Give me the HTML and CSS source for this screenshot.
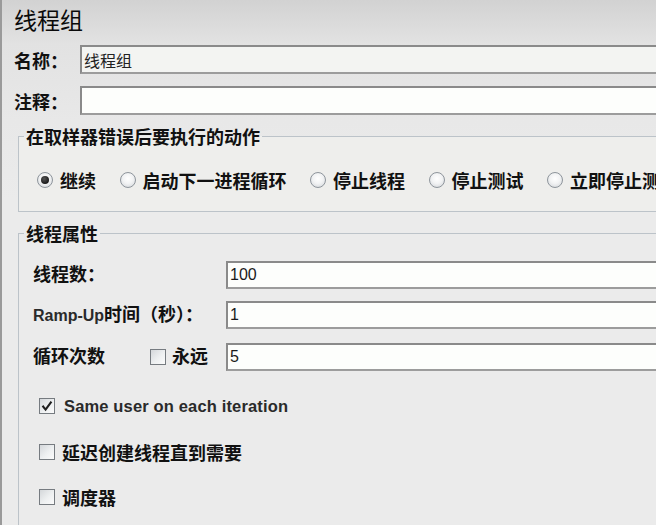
FILE: index.html
```html
<!DOCTYPE html>
<html lang="zh-CN">
<head>
<meta charset="utf-8">
<title>线程组</title>
<link rel="stylesheet" href="styles.css">
</head>
<body>
<div class="panel">
  <div class="title">线程组</div>
  <div class="row r-name">
    <span class="lbl">名称：</span>
    <div class="field field-grey"><span class="val-cjk">线程组</span></div>
  </div>
  <div class="row r-comment">
    <span class="lbl">注释：</span>
    <div class="field"></div>
  </div>
  <fieldset class="group g1">
    <legend>在取样器错误后要执行的动作</legend>
    <div class="radios">
      <span class="opt"><span class="radio on"></span>继续</span>
      <span class="opt"><span class="radio"></span>启动下一进程循环</span>
      <span class="opt"><span class="radio"></span>停止线程</span>
      <span class="opt"><span class="radio"></span>停止测试</span>
      <span class="opt"><span class="radio"></span>立即停止测试</span>
    </div>
  </fieldset>
  <fieldset class="group g2">
    <legend>线程属性</legend>
    <div class="prow p1">
      <span class="plbl">线程数：</span>
      <div class="field"><span class="val">100</span></div>
    </div>
    <div class="prow p2">
      <span class="plbl"><span class="lat">Ramp-Up</span>时间（秒）：</span>
      <div class="field"><span class="val">1</span></div>
    </div>
    <div class="prow p3">
      <span class="plbl loop"><span>循环次数</span><span class="inline-chk"><span class="box"></span>永远</span></span>
      <div class="field"><span class="val">5</span></div>
    </div>
    <div class="crow c1">
      <span class="box checked"><svg width="14" height="14" viewBox="0 0 14 14"><path d="M3.2 7.6 L5.6 10.6 L10.8 3.4" fill="none" stroke="#1e1e1e" stroke-width="2.1" stroke-linecap="square"/></svg></span>
      <span class="lat same">Same user on each iteration</span>
    </div>
    <div class="crow c2"><span class="box"></span>延迟创建线程直到需要</div>
    <div class="crow c3"><span class="box"></span>调度器</div>
  </fieldset>
</div>
</body>
</html>
```
FILE: styles.css
```css
html, body {
  margin: 0;
  padding: 0;
  width: 656px;
  height: 525px;
  overflow: hidden;
}
body {
  background: linear-gradient(to bottom, #d2d2d2 0px, #e2e2e2 44px, #e8e8e8 120px, #ebebeb 200px);
  font-family: "Noto Sans CJK SC", "Liberation Sans", sans-serif;
  color: #111;
}
.panel {
  width: 700px;
  height: 525px;
  border-left: 2px solid #9a9a9a;
  padding-left: 12px;
  box-sizing: border-box;
}
.title {
  height: 44px;
  font-size: 23px;
  line-height: 38px;
  color: #0a0a0a;
}
.row {
  display: flex;
  align-items: center;
  height: 29px;
}
.r-name { margin-top: 1px; }
.r-comment { margin-top: 12px; }
.lbl {
  width: 66px;
  flex: none;
  font-size: 18px;
  font-weight: bold;
  line-height: 24px;
}
.field {
  flex: 1;
  height: 100%;
  box-sizing: border-box;
  border-style: solid;
  border-width: 2px 1px 2px 2px;
  border-color: #8a8a8a #a0a0a0 #9c9c9c #8a8a8a;
  background: #fdfefc;
  display: flex;
  align-items: center;
  padding-left: 2px;
}
.field-grey { background: #f3f4f2; }
.val-cjk {
  font-size: 16px;
  color: #222;
  font-weight: normal;
}
.val {
  font-family: "Liberation Sans", sans-serif;
  font-size: 16px;
  color: #1a1a1a;
}
.group {
  border: 1px solid #bcc3c9;
  margin: 9px -30px 0 4px;
  padding: 0 0 0 5px;
  min-width: 0;
}
.group legend {
  padding: 0 2px;
  font-size: 18px;
  font-weight: bold;
  line-height: 24px;
  color: #111;
}
.g1 {
  background: #eeeeec;
  padding-bottom: 19px;
}
.g2 {
  height: 320px;
  box-sizing: border-box;
}
.radios {
  display: flex;
  align-items: center;
  height: 24px;
  margin-top: 20px;
  margin-left: 13px;
  white-space: nowrap;
  font-size: 18px;
  font-weight: bold;
}
.opt {
  display: flex;
  align-items: center;
  gap: 7px;
  margin-right: 23.5px;
  flex: none;
}
.radio {
  width: 16px;
  height: 16px;
  box-sizing: border-box;
  border-radius: 50%;
  border: 1px solid #8e959c;
  background: radial-gradient(circle at 50% 40%, #ffffff 0%, #f2f3f4 45%, #cfd3d7 100%);
  display: flex;
  align-items: center;
  justify-content: center;
}
.radio.on::after {
  content: "";
  width: 8px;
  height: 8px;
  border-radius: 50%;
  background: radial-gradient(circle at 40% 35%, #555 0%, #1a1a1a 70%);
}
.prow {
  display: flex;
  align-items: center;
  height: 28px;
  margin-left: 9px;
}
.p1 { margin-top: 16px; }
.p2 { margin-top: 12px; }
.p3 { margin-top: 14px; }
.plbl {
  width: 193px;
  flex: none;
  font-size: 18px;
  font-weight: bold;
  font-family: "Liberation Sans", "Noto Sans CJK SC", sans-serif;
  line-height: 24px;
  white-space: nowrap;
}
.lat {
  font-family: "Liberation Sans", sans-serif;
  font-weight: bold;
  font-size: 16px;
  color: #2a2a2a;
}
.plbl .lat { font-size: 16px; }
.same {
  font-size: 16.5px;
  letter-spacing: 0.15px;
}
.loop {
  display: flex;
  align-items: center;
}
.inline-chk {
  display: flex;
  align-items: center;
  gap: 6px;
  margin-left: 45px;
}
.box {
  width: 16px;
  height: 16px;
  box-sizing: border-box;
  border: 1px solid #767b80;
  background: linear-gradient(135deg, #d4d7da 0%, #eef0f1 55%, #fbfbfb 100%);
  flex: none;
  display: flex;
  align-items: center;
  justify-content: center;
}
.box svg { display: block; }
.crow {
  display: flex;
  align-items: center;
  gap: 8px;
  height: 24px;
  margin-left: 15px;
  font-size: 18px;
  font-weight: bold;
  white-space: nowrap;
}
.c1 { margin-top: 23px; gap: 9px; }
.c2 { margin-top: 22px; gap: 7px; }
.c3 { margin-top: 21px; gap: 7px; }
```
